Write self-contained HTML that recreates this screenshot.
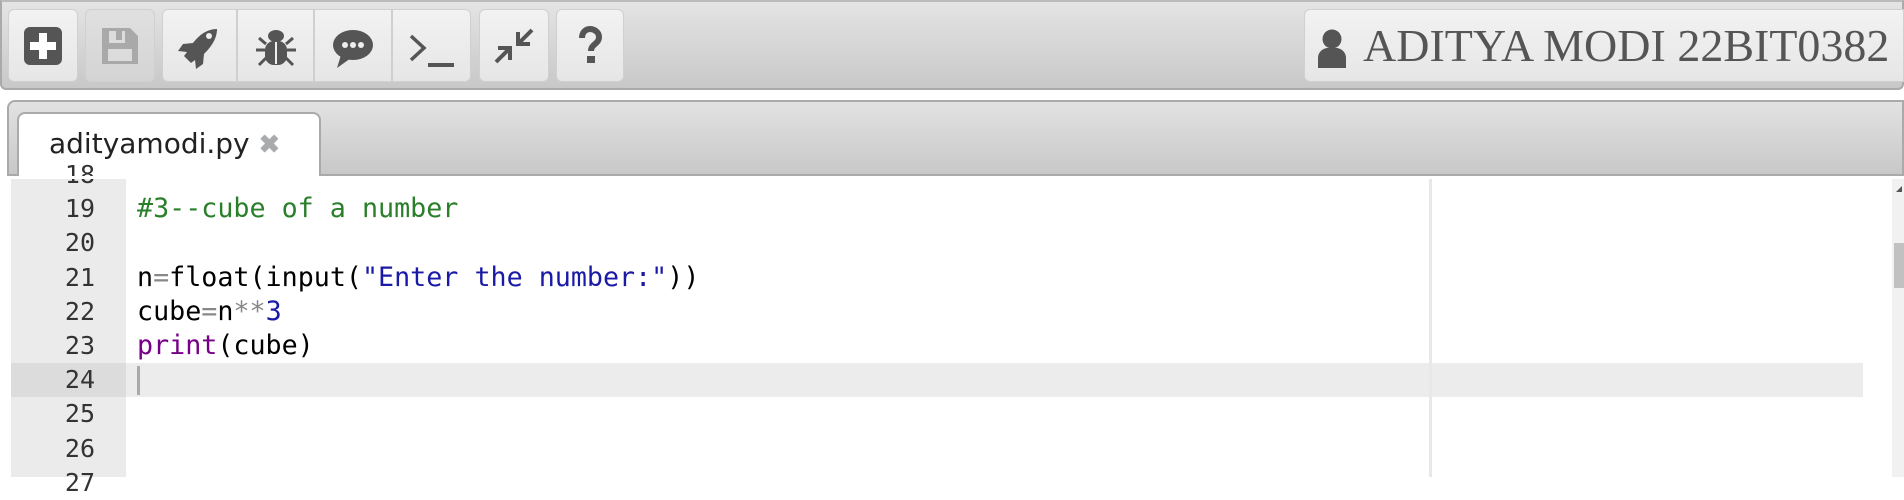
<!DOCTYPE html>
<html><head><meta charset="utf-8"><style>
*{margin:0;padding:0;box-sizing:border-box}
body{width:1904px;height:477px;overflow:hidden;background:#fff;position:relative;font-family:"Liberation Sans",sans-serif}
.tb{position:absolute;left:0;top:0;width:1904px;height:90px;background:linear-gradient(#e4e4e4,#c8c8c8);border:2px solid #aaa;border-top-color:#bbb;border-radius:0 0 6px 6px}
.b{position:absolute;top:9px;height:73px;background:linear-gradient(#f2f2f2,#e6e6e6);border:1px solid #d0d0d0;border-radius:6px;display:flex;align-items:center;justify-content:center}
.b svg{display:block}
.sep{position:absolute;top:9px;width:2px;height:73px;background:#cfcfcf}
.user{position:absolute;left:1304px;top:9px;width:600px;height:73px;background:linear-gradient(#f2f2f2,#e6e6e6);border:1px solid #d0d0d0;border-radius:6px 0 0 6px;font-family:"Liberation Serif",serif;font-size:46px;color:#555;line-height:71px;padding-left:58px}
.tabbar{position:absolute;left:7px;top:100px;width:1897px;height:76px;background:linear-gradient(#e2e2e2,#c8c8c8);border:2px solid #aaa;border-radius:8px 0 0 0}
.tab{position:absolute;left:17px;top:112px;width:304px;height:66px;background:#fff;border:2px solid #aaa;border-bottom:none;border-radius:8px 8px 0 0;font-family:"DejaVu Sans",sans-serif;font-size:28px;color:#222;padding:13px 0 0 30px}
.gut{position:absolute;left:11px;top:179px;width:115px;height:298px;background:#ebebeb}
.ln{position:absolute;left:11px;width:115px;text-align:right;padding-right:31px;font-family:"DejaVu Sans Mono",monospace;font-size:25px;color:#333;height:34px;line-height:34px}
.code{position:absolute;left:137px;font-family:"DejaVu Sans Mono",monospace;font-size:26.7px;height:34px;line-height:34px;color:#000;white-space:pre}
.hl{position:absolute;left:11px;top:363px;width:1852px;height:34px;background:#ececec}
.hlg{position:absolute;left:11px;top:363px;width:115px;height:34px;background:#dcdcdc}
.ruler{position:absolute;left:1429px;top:179px;width:3px;height:298px;background:#e8e8e8}
.sb{position:absolute;left:1892px;top:179px;width:12px;height:298px;background:#f1f1f1}
.th{position:absolute;left:1894px;top:243px;width:10px;height:45px;background:#c1c1c1}
.c{color:#2a7f2a}.k{color:#770088}.s{color:#1a1aa6}.n{color:#1a1aa6}.o{color:#888}
</style></head><body>
<div class="tb"></div>
<div class="b" style="left:8px;width:70px"><svg width="40" height="40" viewBox="0 0 40 40"><rect x="1" y="1" width="38" height="38" rx="6" fill="#555"/><rect x="16" y="7" width="8" height="26" fill="#fff"/><rect x="7" y="16" width="26" height="8" fill="#fff"/></svg></div>
<div class="b" style="left:85px;width:70px;background:linear-gradient(#e0e0e0,#d4d4d4)"><svg width="40" height="40" viewBox="0 0 40 40"><path d="M2 2h28l8 8v28H2z" fill="#a9a9a9"/><rect x="9" y="5" width="16" height="12" fill="#dcdcdc"/><rect x="16" y="5" width="6" height="9" fill="#a9a9a9"/><rect x="8" y="23" width="24" height="12" fill="#dcdcdc"/></svg></div>
<div class="b" style="left:162px;width:309px"></div>
<div class="sep" style="left:236px"></div><div class="sep" style="left:313px"></div><div class="sep" style="left:391px"></div>
<svg style="position:absolute;left:177px;top:27px" width="44" height="42" viewBox="0 0 44 42"><path d="M40 2C30 2 22 8 16 16L6 17 1 24l9 1-3 4 7 7 4-3 1 9 7-5 1-10C34 20 40 12 40 2z" fill="#555"/><circle cx="32" cy="9" r="3" fill="#eee"/></svg>
<svg style="position:absolute;left:254px;top:26px" width="44" height="44" viewBox="0 0 44 44"><ellipse cx="22" cy="10" rx="8" ry="6" fill="#555"/><rect x="11" y="15" width="22" height="24" rx="9" fill="#555"/><rect x="21" y="16" width="2" height="22" fill="#eee"/><path d="M2 24h9M33 24h9M5 12l7 6M39 12l-7 6M5 39l7-7M39 39l-7-7" stroke="#555" stroke-width="3"/></svg>
<svg style="position:absolute;left:331px;top:28px" width="44" height="42" viewBox="0 0 44 42"><ellipse cx="22" cy="17" rx="20" ry="15" fill="#555"/><path d="M10 27L6 40 20 30z" fill="#555"/><circle cx="14" cy="17" r="3" fill="#eee"/><circle cx="22" cy="17" r="3" fill="#eee"/><circle cx="30" cy="17" r="3" fill="#eee"/></svg>
<svg style="position:absolute;left:408px;top:30px" width="48" height="40" viewBox="0 0 48 40"><path d="M3 6l13 12L3 30" stroke="#555" stroke-width="3.5" fill="none"/><rect x="20" y="33" width="26" height="4" fill="#555"/></svg>
<div class="b" style="left:479px;width:70px"><svg width="40" height="40" viewBox="0 0 40 40"><path d="M38 4L26 16M24 6v12h12M2 36l12-12M4 22h12v12" stroke="#555" stroke-width="4" fill="none"/></svg></div>
<div class="b" style="left:556px;width:68px"><svg width="24" height="40" viewBox="0 0 24 40"><path d="M4 12c0-6 4-9 8-9s9 3 9 8c0 7-8 7-8 14" stroke="#555" stroke-width="6" fill="none"/><rect x="9" y="30" width="8" height="7" fill="#555"/></svg></div>
<div class="user">ADITYA MODI 22BIT0382</div>
<svg style="position:absolute;left:1318px;top:29px" width="28" height="39" viewBox="0 0 28 39"><circle cx="14" cy="10" r="9.5" fill="#555"/><path d="M0 39V29c0-6 5-10 10-10h8c5 0 10 4 10 10v10z" fill="#555"/></svg>
<div class="tabbar"></div>
<div class="tab">adityamodi.py <span style="color:#aaa;font-size:26px;text-shadow:0 0 1px #68a">✖</span></div>
<div class="gut"></div>
<div class="hl"></div><div class="hlg"></div>
<div class="ruler"></div>
<div class="ln" style="top:158px">18</div>
<div class="ln" style="top:192px">19</div>
<div class="ln" style="top:226px">20</div>
<div class="ln" style="top:261px">21</div>
<div class="ln" style="top:295px">22</div>
<div class="ln" style="top:329px">23</div>
<div class="ln" style="top:363px">24</div>
<div class="ln" style="top:397px">25</div>
<div class="ln" style="top:432px">26</div>
<div class="ln" style="top:466px">27</div>
<div style="position:absolute;left:0;top:176px;width:1904px;height:3px;background:#fff"></div>
<div class="code c" style="top:192px">#3--cube of a number</div>
<div class="code" style="top:261px">n<span class="o">=</span>float(input(<span class="s">"Enter the number:"</span>))</div>
<div class="code" style="top:295px">cube<span class="o">=</span>n<span class="o">**</span><span class="n">3</span></div>
<div class="code" style="top:329px"><span class="k">print</span>(cube)</div>
<div style="position:absolute;left:137px;top:366px;width:3px;height:29px;background:#aaa"></div>
<div class="sb"></div><div class="th"></div>
<div style="position:absolute;left:1896px;top:186px;width:0;height:0;border-left:6px solid transparent;border-bottom:6px solid #555"></div>
</body></html>
